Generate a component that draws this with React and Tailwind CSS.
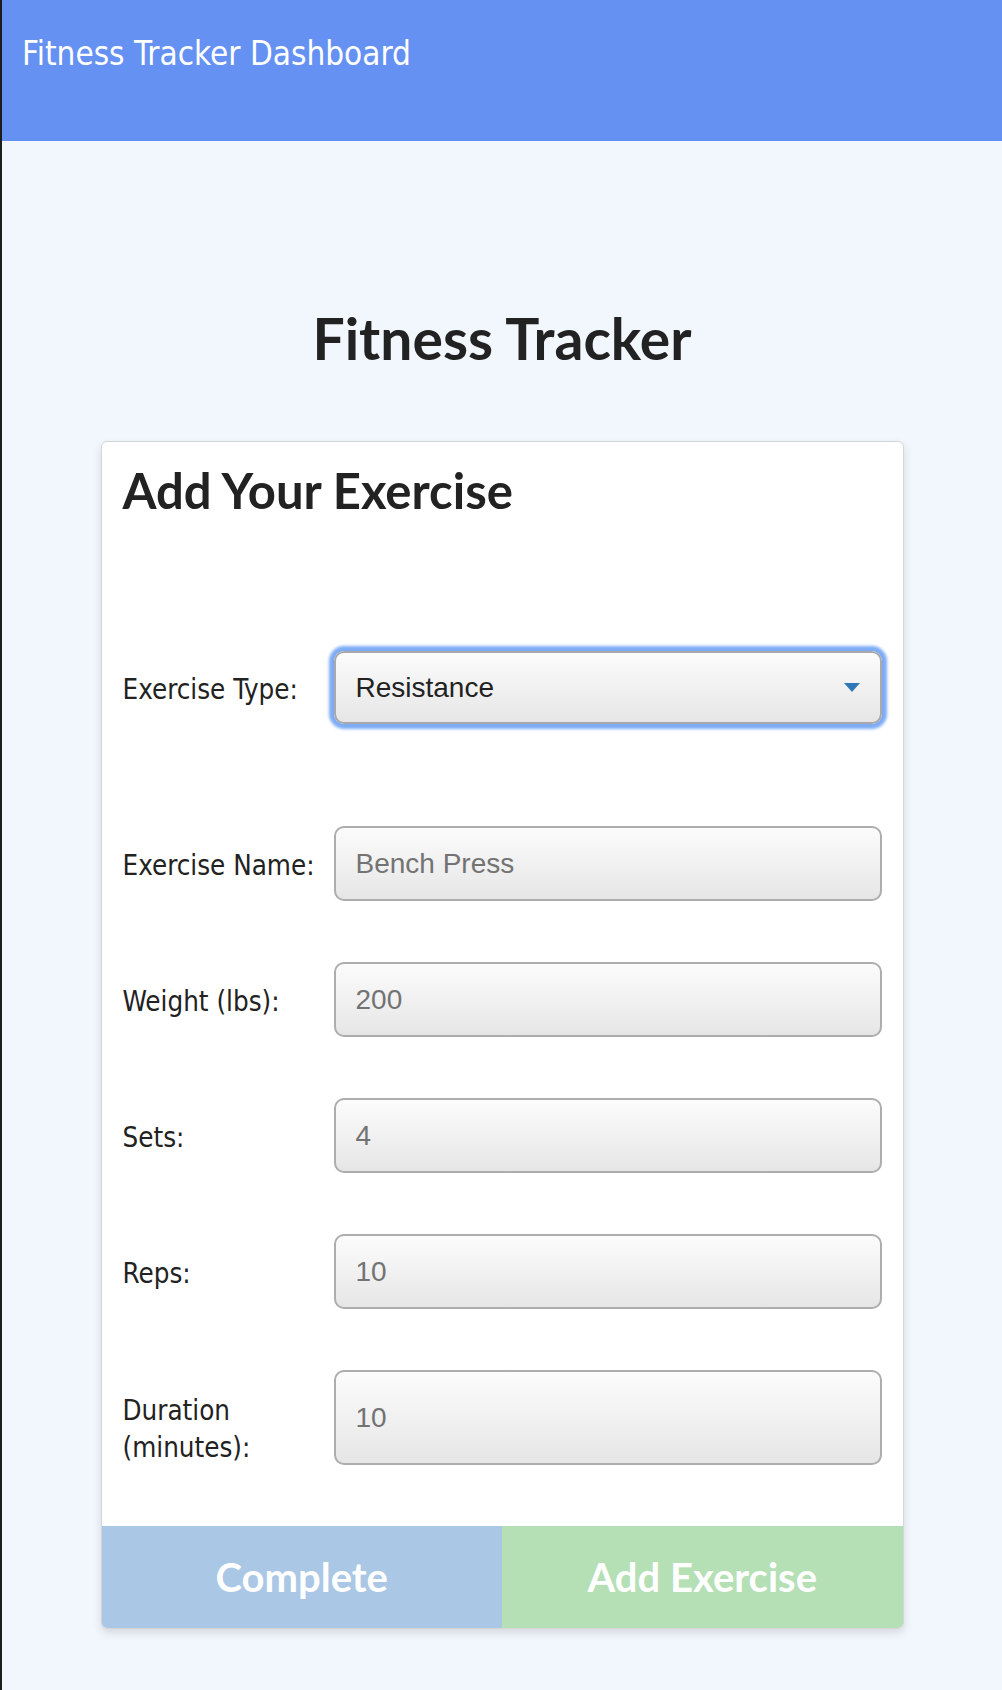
import React from 'react';

const tahoma = { fontFamily: '"DejaVu Sans Condensed", "DejaVu Sans", sans-serif' };

function Field({ label, value, tall }) {
  return (
    <div className={`flex items-center ${tall ? 'h-[95px]' : 'h-[75px]'}`}>
      <label
        className={`w-[211px] shrink-0 text-[27.5px] leading-[37px] text-[#222] ${tall ? 'pt-[22px]' : 'pt-[4px]'}`}
        style={tahoma}
      >
        {label}
      </label>
      <div className="flex-1 h-full flex items-center pl-[20px] rounded-[10px] border-2 border-[#adadad] bg-linear-to-b from-[#fcfcfc] to-[#e6e6e6] text-[28px] text-[#737373] font-['Liberation_Sans',Arial,sans-serif]">
        {value}
      </div>
    </div>
  );
}

export default function App() {
  return (
    <div className="min-h-[1690px] bg-[#f2f7fd] border-l-2 border-[#1e1e1e]">
      {/* top bar */}
      <header className="h-[141px] bg-[#6591f3] pl-[20px] pt-[34px]">
        <h1 className="text-white text-[33px] leading-[40px]" style={tahoma}>
          Fitness Tracker Dashboard
        </h1>
      </header>

      <h2 className="mt-[169px] text-center text-[57px] leading-none font-bold text-[#222] font-['Lato',sans-serif]">
        Fitness Tracker
      </h2>

      <div className="mx-auto mt-[74px] w-[803px] rounded-md border border-[#d6d6d6] bg-white shadow-[0_4px_10px_rgba(0,0,0,0.12)] overflow-hidden">
        <div className="px-[21px] pt-[24px]">
          <h3 className="text-[49px] leading-none font-bold text-[#222] font-['Lato',sans-serif]">
            Add Your Exercise
          </h3>

          {/* exercise type select */}
          <div className="mt-[136px] flex items-center h-[73px]">
            <label className="w-[211px] shrink-0 pt-[4px] text-[27.5px] leading-[37px] text-[#222]" style={tahoma}>
              Exercise Type:
            </label>
            <div className="flex-1 h-full flex items-center justify-between pl-[20px] pr-[20px] rounded-[10px] border-2 border-[#a9a9a9] bg-linear-to-b from-[#fcfcfc] to-[#e6e6e6] shadow-[0_0_3px_5px_rgba(118,166,246,0.95)] text-[28px] text-[#222] font-['Liberation_Sans',Arial,sans-serif]">
              <span>Resistance</span>
              <svg width="16" height="9" viewBox="0 0 16 9">
                <path d="M0 0 H16 L8 9 Z" fill="#2f78b5" />
              </svg>
            </div>
          </div>

          <div className="mt-[102px] flex flex-col gap-[61px]">
            <Field label="Exercise Name:" value="Bench Press" />
            <Field label="Weight (lbs):" value="200" />
            <Field label="Sets:" value="4" />
            <Field label="Reps:" value="10" />
            <Field label={<>Duration<br />(minutes):</>} value="10" tall />
          </div>
        </div>

        <div className="mt-[61px] flex h-[102px] font-['Lato',sans-serif] font-bold text-white text-[40px]">
          <button className="flex-1 bg-[#aac7e6]">Complete</button>
          <button className="flex-1 bg-[#b5dfb4]">Add Exercise</button>
        </div>
      </div>
    </div>
  );
}
